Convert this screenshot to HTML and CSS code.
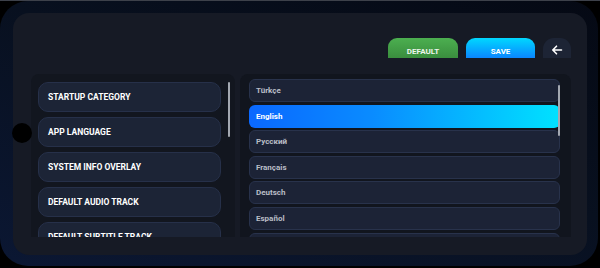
FILE: index.html
```html
<!DOCTYPE html>
<html lang="en">
<head>
    <meta charset="UTF-8">
    <meta name="viewport" content="width=device-width, initial-scale=1.0">
    <title>Settings</title>
    <link rel="stylesheet" href="styles.css">
</head>
<body>
    <div class="topline"></div>
    <div class="frame">
        <div class="inner">
            <div class="toolbar">
                <button class="btn btn-default">DEFAULT</button>
                <button class="btn btn-save">SAVE</button>
                <button class="btn btn-back" aria-label="Back">
                    <svg width="12" height="12" viewBox="0 0 12 12">
                        <path d="M10.5 6H2M5.5 2.2L1.8 6l3.7 3.8" fill="none" stroke="#ffffff" stroke-width="1.6" stroke-linecap="round" stroke-linejoin="round"/>
                    </svg>
                </button>
            </div>
            <div class="panels">
                <div class="panel panel-left">
                    <div class="cat">STARTUP CATEGORY</div>
                    <div class="cat">APP LANGUAGE</div>
                    <div class="cat">SYSTEM INFO OVERLAY</div>
                    <div class="cat">DEFAULT AUDIO TRACK</div>
                    <div class="cat">DEFAULT SUBTITLE TRACK</div>
                    <div class="thumb thumb-left"></div>
                </div>
                <div class="panel panel-right">
                    <div class="lang">Türkçe</div>
                    <div class="lang active">English</div>
                    <div class="lang">Русский</div>
                    <div class="lang">Français</div>
                    <div class="lang">Deutsch</div>
                    <div class="lang">Español</div>
                    <div class="lang">Italiano</div>
                    <div class="thumb thumb-right"></div>
                </div>
            </div>
        </div>
    </div>
    <div class="dot"></div>
</body>
</html>
```

FILE: styles.css
```css
body {
    margin: 0;
    width: 600px;
    height: 268px;
    background: #000000;
    font-family: 'Roboto', 'Liberation Sans', sans-serif;
    position: relative;
    overflow: hidden;
}
.topline {
    height: 1px;
    background: #3d414a;
}
.frame {
    width: 598px;
    height: 265px;
    box-sizing: border-box;
    padding: 12px 11px 11px 13px;
    border-radius: 28px;
    background: linear-gradient(20deg, #0b1733 0%, #08101f 55%, #050914 100%);
}
.inner {
    height: 100%;
    box-sizing: border-box;
    background: #161a25;
    border-radius: 16px;
    padding: 25px 16px 18px 18px;
    display: flex;
    flex-direction: column;
}
.toolbar {
    display: flex;
    justify-content: flex-end;
    gap: 8px;
    height: 20px;
}
.btn {
    border: none;
    margin: 0;
    padding: 0;
    height: 20px;
    border-radius: 9px 9px 0 0;
    color: #ffffff;
    font-family: inherit;
    font-weight: 700;
    font-size: 8px;
    display: flex;
    align-items: center;
    justify-content: center;
    padding-top: 6px;
    box-sizing: border-box;
}
.btn-default {
    width: 70px;
    background: linear-gradient(#4caf50, #3a8e3e);
    color: #eef6ee;
}
.btn-save {
    width: 69px;
    background: linear-gradient(#00d8ff, #0a86ff);
}
.btn-back {
    width: 28px;
    border-radius: 11px 11px 0 0;
    background: #1d2435;
    padding-top: 4px;
}
.panels {
    margin-top: 16px;
    flex: 1;
    display: flex;
    gap: 5px;
    min-height: 0;
}
.panel {
    position: relative;
    overflow: hidden;
    display: flex;
    flex-direction: column;
    border-radius: 8px 8px 0 0;
}
.panel-left {
    width: 204px;
    background: #12161f;
    padding: 8px 0 0 7px;
    gap: 5px;
    box-sizing: border-box;
}
.panel-right {
    flex: 1;
    background: #11151e;
    padding: 5px 11px 0 9px;
    gap: 2.6px;
    box-sizing: border-box;
}
.cat {
    flex: none;
    width: 183px;
    height: 30px;
    box-sizing: border-box;
    border-radius: 10px;
    background: #1c2436;
    border: 1px solid #263049;
    color: #ffffff;
    font-weight: 700;
    font-size: 8.5px;
    display: flex;
    align-items: center;
    padding-left: 9px;
}
.lang {
    flex: none;
    height: 23px;
    box-sizing: border-box;
    border-radius: 6px;
    background: #1c2336;
    border: 1px solid #28324b;
    color: #b9bdc6;
    font-weight: 700;
    font-size: 8px;
    display: flex;
    align-items: center;
    padding-left: 6px;
}
.lang.active {
    border: none;
    padding-left: 7px;
    color: #ffffff;
    background: linear-gradient(90deg, #0a68ff 0%, #0a8cff 40%, #00e2ff 100%);
}
.thumb {
    position: absolute;
    width: 2px;
    border-radius: 1px;
    background: #a3a8b1;
}
.thumb-left {
    left: 197px;
    top: 8px;
    height: 55px;
}
.thumb-right {
    right: 11px;
    top: 11px;
    height: 51px;
}
.dot {
    position: absolute;
    left: 12px;
    top: 123px;
    width: 20px;
    height: 20px;
    border-radius: 50%;
    background: #000000;
}
```
